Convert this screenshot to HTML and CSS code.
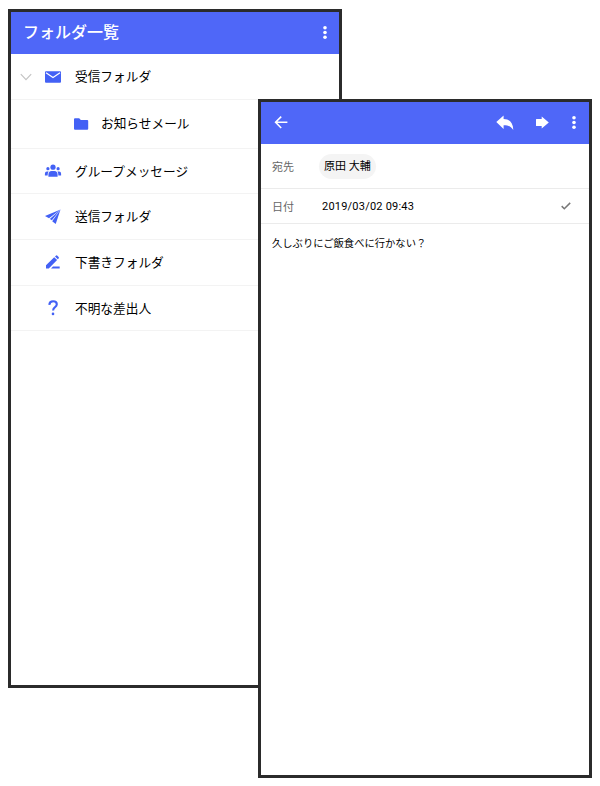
FILE: index.html
```html
<!DOCTYPE html>
<html lang="ja">
<head>
  <meta charset="UTF-8" />
  <meta name="viewport" content="width=device-width, initial-scale=1.0" />
  <title>フォルダ一覧</title>
  <link rel="stylesheet" href="styles.css">
</head>
<body>
  <!-- フォルダ一覧 -->
  <div class="screen screen-folders">
    <div class="header">
      <h1 class="title">フォルダ一覧</h1>
      <svg class="icon-more" width="4" height="14" viewBox="0 0 4 14" fill="#fff">
        <circle cx="2" cy="1.8" r="1.8"/><circle cx="2" cy="6.5" r="1.8"/><circle cx="2" cy="11.2" r="1.8"/>
      </svg>
    </div>
    <ul class="folders">
      <li class="folder">
        <svg class="chevron" width="12" height="8" viewBox="0 0 12 8" fill="none" stroke="#c4c4c4" stroke-width="1.2">
          <path d="M.8 1.2 6 6.6l5.2-5.4"/>
        </svg>
        <svg class="icon" width="18" height="18" viewBox="0 0 18 18">
          <rect x="1" y="3.3" width="16" height="11.4" rx="1" fill="#4361f5"/>
          <path d="M2 4.7 9 9.6l7-4.9" fill="none" stroke="#fff" stroke-width="1.2"/>
        </svg>
        <span>受信フォルダ</span>
      </li>
      <li class="folder folder-child">
        <svg class="icon" width="18" height="18" viewBox="0 0 18 18" fill="#4361f5">
          <path d="M3 3.3h4.2L8.8 5.1h6.4q1 0 1 1v7.6q0 1-1 1H3q-1 0-1-1V4.3q0-1 1-1z"/>
        </svg>
        <span>お知らせメール</span>
      </li>
      <li class="folder">
        <svg class="icon" width="18" height="18" viewBox="0 0 18 18" fill="#4361f5">
          <circle cx="9" cy="5.2" r="2.6"/>
          <circle cx="3.9" cy="6.7" r="1.6"/>
          <circle cx="14.1" cy="6.7" r="1.6"/>
          <path d="M4.4 14.8v-1.9q0-4 3.3-4h2.6q3.3 0 3.3 4v1.9z"/>
          <path d="M.9 13.4v-1.7q0-2.2 2-2.2h1.7q-1 1.4-1 3.9zM17.1 13.4v-1.7q0-2.2-2-2.2h-1.7q1 1.4 1 3.9z"/>
        </svg>
        <span>グループメッセージ</span>
      </li>
      <li class="folder">
        <svg class="icon" width="18" height="18" viewBox="0 0 18 18" fill="#4361f5">
          <path d="M16.5 1.5 1 8.1l4 2.2z"/>
          <path d="M16.5 1.5 5.8 11.1l2.1 1.2z"/>
          <path d="M16.5 1.5 8.2 13.2l3.5 2.9z"/>
        </svg>
        <span>送信フォルダ</span>
      </li>
      <li class="folder">
        <svg class="icon" width="18" height="18" viewBox="0 0 18 18" fill="#4361f5">
          <path d="M2 15.4v-3.1l8.2-8.1 2.9 2.9-8.3 8.3zM11 3.5l.8-.8q.8-.8 1.6 0l1.2 1.2q.8.8 0 1.6l-.8.8z"/>
          <path d="M9 13.4h6.7v2H7z"/>
        </svg>
        <span>下書きフォルダ</span>
      </li>
      <li class="folder">
        <svg class="icon" width="18" height="18" viewBox="0 0 18 18">
          <path d="M5.3 5.8Q5.6 2.3 9.1 2.3q3.7 0 3.7 3 0 1.5-1.8 2.8Q9.1 9.4 9.1 11.6" fill="none" stroke="#4361f5" stroke-width="2.1"/>
          <circle cx="9" cy="14.9" r="1.3" fill="#4361f5"/>
        </svg>
        <span>不明な差出人</span>
      </li>
    </ul>
  </div>

  <!-- メール詳細 -->
  <div class="screen screen-mail">
    <div class="header">
      <svg class="icon-back" width="14" height="14" viewBox="0 0 14 14" fill="none" stroke="#fff" stroke-width="1.6">
        <path d="M13.4 6.3H1.8M7.2.6 1.6 6.3 7.2 12"/>
      </svg>
      <div class="actions">
        <svg width="18" height="16" viewBox="0 0 18 16" fill="#fff">
          <path d="M.3 7.1 7.6.4v3.5c6 .1 9.4 3.8 9.7 11.1-2.4-3.6-5.1-4.7-9.7-4.7v3.6z"/>
        </svg>
        <svg width="14" height="14" viewBox="0 0 14 14" fill="#fff">
          <path d="M.5 2.9h5.2V.5L12.8 6.5l-7.1 6v-2.4H.5q-.5 0-.5-.5V3.4q0-.5.5-.5z"/>
        </svg>
        <svg width="4" height="14" viewBox="0 0 4 14" fill="#fff">
          <circle cx="2" cy="1.8" r="1.8"/><circle cx="2" cy="6.5" r="1.8"/><circle cx="2" cy="11.2" r="1.8"/>
        </svg>
      </div>
    </div>
    <div class="field field-to">
      <span class="label">宛先</span>
      <span class="chip">原田 大輔</span>
    </div>
    <div class="field field-date">
      <span class="label">日付</span>
      <span class="date">2019/03/02 09:43</span>
      <svg class="check" width="10" height="8" viewBox="0 0 10 8" fill="none" stroke="#777" stroke-width="1.5">
        <path d="M.7 4.1 3.3 6.7 9.2.9"/>
      </svg>
    </div>
    <p class="message">久しぶりにご飯食べに行かない？</p>
  </div>
</body>
</html>
```
FILE: styles.css
```css
body {
  margin: 0;
  position: relative;
  height: 786px;
  overflow: hidden;
  background: #fff;
  color: #000;
  font-family: Roboto, "Noto Sans CJK JP", sans-serif;
}
.screen {
  position: absolute;
  box-sizing: border-box;
  width: 334px;
  height: 679px;
  border: 3px solid #2b2b2b;
  background: #fff;
}
.screen-folders {
  left: 8px;
  top: 9px;
}
.screen-mail {
  left: 258px;
  top: 99px;
}
.header {
  display: flex;
  align-items: center;
  justify-content: space-between;
  box-sizing: border-box;
  height: 42px;
  padding: 0 12px;
  background: #4f67f8;
  color: #fff;
}
.title {
  margin: 0;
  font-size: 16px;
  line-height: 24px;
  font-weight: 500;
}
.folders {
  list-style: none;
  margin: 0;
  padding: 0;
}
.folder {
  display: flex;
  align-items: center;
  box-sizing: border-box;
  height: 45.7px;
  padding-left: 33px;
  border-bottom: 1px solid #f3f3f3;
  font-size: 12.7px;
  line-height: 20px;
}
.folder:first-child {
  padding-top: 1px;
}
.folder span {
  padding-top: 1px;
}
.folder-child {
  height: 49px;
  padding-left: 61px;
}
.icon {
  margin-right: 13px;
}
.folder-child .icon {
  margin-right: 11px;
}
.chevron {
  margin: 0 12px 0 -24px;
}

/* メール詳細 */
.screen-mail .header {
  padding: 0 13px;
}
.actions {
  display: flex;
  align-items: center;
  gap: 22px;
}
.field {
  display: flex;
  align-items: center;
  box-sizing: border-box;
  padding: 0 18px 0 11px;
  border-bottom: 1px solid #ebebeb;
  font-size: 11px;
}
.field-to {
  height: 45px;
}
.field-date {
  height: 35px;
}
.label {
  width: 50px;
  color: #666;
}
.chip {
  margin-left: -3px;
  padding: 1px 5px 0;
  border-radius: 13px;
  background: #f4f4f4;
  font-size: 11px;
  line-height: 24px;
}
.date {
  letter-spacing: 0.22px;
  padding-top: 1px;
}
.check {
  margin-left: auto;
}
.message {
  margin: 11px;
  font-size: 10.3px;
  line-height: 18px;
}
```
